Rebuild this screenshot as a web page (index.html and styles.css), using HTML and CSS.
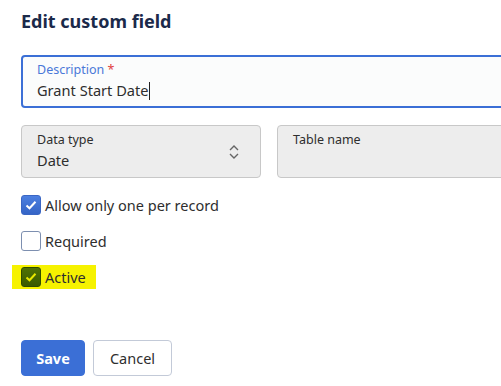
FILE: index.html
```html
<!DOCTYPE html>
<html lang="en">
<head>
    <meta charset="UTF-8">
    <title>Edit custom field</title>
    <link rel="stylesheet" href="styles.css">
</head>
<body>
    <div class="panel">
        <h2 class="title">Edit custom field</h2>

        <div class="field field-active">
            <label class="field-label">Description <span class="req">*</span></label>
            <div class="field-value">Grant Start Date<span class="caret"></span></div>
        </div>

        <div class="field-row">
            <div class="field field-select">
                <label class="field-label">Data type</label>
                <div class="field-value">Date</div>
                <svg class="chevrons" width="12" height="16" viewBox="0 0 12 16">
                    <path d="M2 6 L6 2 L10 6" fill="none" stroke="#666" stroke-width="1.4"/>
                    <path d="M2 10 L6 14 L10 10" fill="none" stroke="#666" stroke-width="1.4"/>
                </svg>
            </div>
            <div class="field field-select">
                <label class="field-label">Table name</label>
                <div class="field-value"></div>
            </div>
        </div>

        <div class="checks">
            <label class="check">
                <span class="box checked">
                    <svg width="14" height="14" viewBox="0 0 14 14"><path d="M2.5 7.5 L5.5 10.3 L11.5 3.8" fill="none" stroke="#fff" stroke-width="2"/></svg>
                </span>
                Allow only one per record
            </label>
            <label class="check">
                <span class="box"></span>
                Required
            </label>
            <label class="check highlight">
                <span class="box checked marked">
                    <svg width="14" height="14" viewBox="0 0 14 14"><path d="M2.5 7.5 L5.5 10.3 L11.5 3.8" fill="none" stroke="#e8e800" stroke-width="2"/></svg>
                </span>
                Active
            </label>
        </div>

        <div class="actions">
            <button class="btn btn-primary">Save</button>
            <button class="btn btn-secondary">Cancel</button>
        </div>
    </div>
</body>
</html>
```

FILE: styles.css
```css
:root {
    --blue: #3b6fd6;
    --navy: #1b2a4a;
    --text: #2e2e2e;
    --field-bg: #ededed;
    --field-border: #c8c8c8;
}

body {
    margin: 0;
    font-family: 'Noto Sans', 'Open Sans', sans-serif;
    color: var(--text);
    background: #fff;
    overflow: hidden;
}

.panel {
    width: 496px;
    padding: 9px 0 0 21px;
}

.title {
    margin: 0;
    font-size: 18px;
    line-height: 24px;
    font-weight: 700;
    color: var(--navy);
}

.field {
    position: relative;
    box-sizing: border-box;
    height: 53px;
    border-radius: 4px;
    padding: 6px 15px 0;
}

.field-active {
    margin-top: 22px;
    border: 2px solid var(--blue);
    background: #fbfcfc;
    padding: 4px 14px 0;
}

.field-label {
    display: block;
    font-size: 12.5px;
    line-height: 17px;
}

.field-active .field-label {
    color: #4a78d8;
}

.req {
    color: #e04040;
}

.field-value {
    font-size: 14.6px;
    line-height: 22px;
    margin-top: 1px;
}

.caret {
    display: inline-block;
    width: 1px;
    height: 18px;
    background: #222;
    vertical-align: -4px;
}

.field-row {
    display: grid;
    grid-template-columns: 240px 240px;
    gap: 16px;
    margin-top: 17px;
}

.field-select {
    border: 1px solid var(--field-border);
    background: var(--field-bg);
    padding-top: 5px;
}

.chevrons {
    position: absolute;
    right: 20px;
    top: 18px;
}

.checks {
    display: flex;
    flex-direction: column;
    gap: 16px;
    margin-top: 17px;
}

.check {
    display: flex;
    align-items: center;
    gap: 4px;
    font-size: 14.5px;
    line-height: 20px;
    height: 20px;
}

.box {
    box-sizing: border-box;
    width: 20px;
    height: 20px;
    border: 1px solid #7d8fb0;
    border-radius: 3px;
    background: #fff;
    display: flex;
    align-items: center;
    justify-content: center;
}

.box.checked {
    border-color: #3a66c4;
    background: linear-gradient(#4c7fe0, #3564c6);
}

.box.marked {
    border-color: #2f4c00;
    background: linear-gradient(#4f7204, #3a5a00);
}

.highlight {
    align-self: flex-start;
    background: #f6f200;
    margin-left: -9px;
    padding: 2px 10px 2px 9px;
    margin-top: -2px;
    margin-bottom: -2px;
}

.actions {
    display: flex;
    gap: 8px;
    margin-top: 53px;
}

.btn {
    box-sizing: border-box;
    height: 36px;
    border-radius: 4px;
    font-family: inherit;
    font-size: 14.5px;
    padding: 0 12px;
}

.btn-primary {
    width: 64px;
    background: var(--blue);
    border: 1px solid var(--blue);
    color: #fff;
    font-weight: 700;
}

.btn-secondary {
    width: 79px;
    background: #fff;
    border: 1px solid #c3cad8;
    color: var(--text);
}
```
